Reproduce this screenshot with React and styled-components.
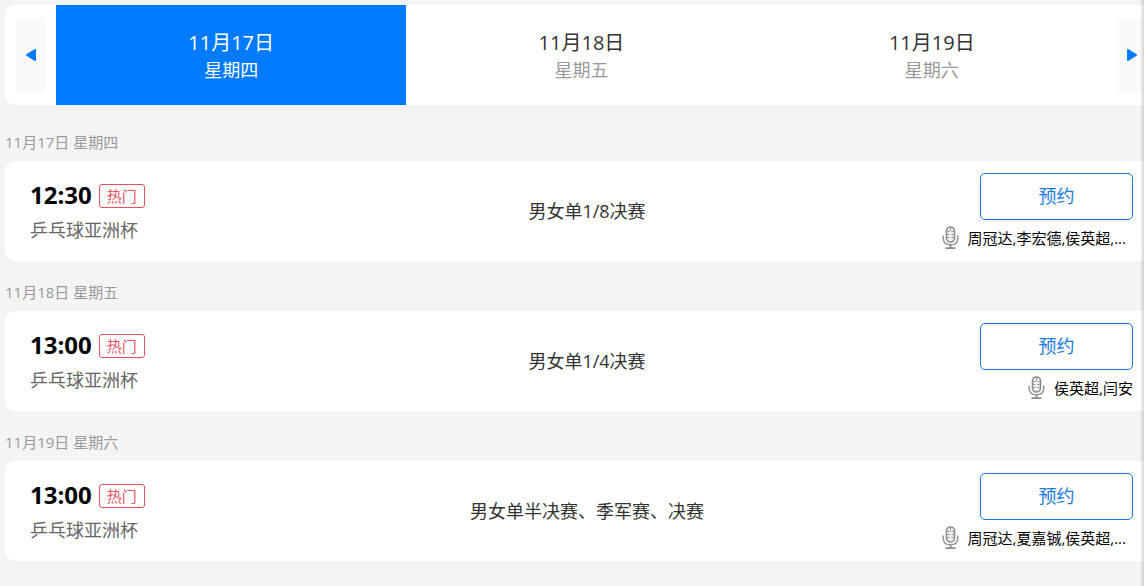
import { useState } from "react";
import styled, { createGlobalStyle } from "styled-components";

const days = [
  { date: "11月17日", week: "星期四" },
  { date: "11月18日", week: "星期五" },
  { date: "11月19日", week: "星期六" },
];

const matches = [
  {
    day: "11月17日 星期四",
    time: "12:30",
    league: "乒乓球亚洲杯",
    title: "男女单1/8决赛",
    hosts: "周冠达,李宏德,侯英超,...",
    long: true,
  },
  {
    day: "11月18日 星期五",
    time: "13:00",
    league: "乒乓球亚洲杯",
    title: "男女单1/4决赛",
    hosts: "侯英超,闫安",
  },
  {
    day: "11月19日 星期六",
    time: "13:00",
    league: "乒乓球亚洲杯",
    title: "男女单半决赛、季军赛、决赛",
    hosts: "周冠达,夏嘉铖,侯英超,...",
    long: true,
  },
];

const MicIcon = () => (
  <svg width="18" height="24" viewBox="0 0 18 24" fill="none" aria-hidden="true">
    <rect x="4.5" y="1" width="8" height="15" rx="4" fill="#f2f2f2" stroke="#8c8c8c" strokeWidth="1.6" />
    <path d="M8.500 2v3M5.500 5.500h2M9.500 5.500h2M5.500 8.500h2M9.500 8.500h2M5.500 11.500h2M9.500 11.500h2" stroke="#8c8c8c" />
    <path d="M1.200 9.500V12c0 4.500 3 6.800 7.300 6.800s7.300-2.300 7.300-6.800V9.500" stroke="#999" strokeWidth="1.600" />
    <path d="M8.500 19v3M3.500 22.200h10" stroke="#8c8c8c" strokeWidth="1.800" />
  </svg>
);

const App = () => {
  const [active, setActive] = useState(0);

  const move = (step) => {
    setActive((prev) => Math.min(days.length - 1, Math.max(0, prev + step)));
  };

  return (
    <>
      <GlobalStyle />
      <Page>
        <DateBar>
          <Arrow type="button" aria-label="前一天" $width={30} onClick={() => move(-1)}>
            <svg width="12" height="14" viewBox="0 0 12 14" aria-hidden="true">
              <path d="M10 2v10L2 7z" fill="#007aff" stroke="#007aff" strokeWidth="2" strokeLinejoin="round" />
            </svg>
          </Arrow>
          <Days>
            {days.map((day, index) => (
              <Day
                key={day.date}
                type="button"
                $active={index === active}
                onClick={() => setActive(index)}
              >
                <DayDate>{day.date}</DayDate>
                <DayWeek $active={index === active}>{day.week}</DayWeek>
              </Day>
            ))}
          </Days>
          <Arrow type="button" aria-label="后一天" $width={27} onClick={() => move(1)}>
            <svg width="14" height="14" viewBox="0 0 14 14" aria-hidden="true">
              <path d="M4 2v10l8-5z" fill="#007aff" stroke="#007aff" strokeWidth="2" strokeLinejoin="round" />
            </svg>
          </Arrow>
        </DateBar>

        {matches.map((match) => (
          <section key={match.day}>
            <SectionTitle>{match.day}</SectionTitle>
            <Card>
              <Info>
                <TimeRow>
                  <Time>{match.time}</Time>
                  <Tag>热门</Tag>
                </TimeRow>
                <League>{match.league}</League>
              </Info>
              <Title>{match.title}</Title>
              <Side>
                <BookButton type="button">预约</BookButton>
                <Hosts>
                  <MicIcon />
                  <HostNames $long={match.long}>{match.hosts}</HostNames>
                </Hosts>
              </Side>
            </Card>
          </section>
        ))}
        <EdgeShadow />
      </Page>
    </>
  );
};

export default App;

const GlobalStyle = createGlobalStyle`
  * {
    box-sizing: border-box;
  }

  body {
    margin: 0;
    background: #f4f4f4;
    font-family: "Open Sans", "Noto Sans CJK SC", sans-serif;
  }

  button {
    font-family: inherit;
    cursor: pointer;
  }
`;

const Page = styled.main`
  position: relative;
  min-height: 100vh;
  padding: 5px 0 0 5px;
`;

const DateBar = styled.nav`
  display: flex;
  align-items: center;
  gap: 10px;
  height: 100px;
  padding-left: 11px;
  background: #fff;
  border-radius: 10px 0 0 10px;
`;

const Arrow = styled.button`
  display: flex;
  align-items: center;
  justify-content: center;
  flex: none;
  width: ${({ $width }) => $width}px;
  height: 75px;
  padding: 0;
  border: none;
  background: #fafafa;
`;

const Days = styled.div`
  display: flex;
  flex: 1;
  height: 100%;
`;

const Day = styled.button`
  display: flex;
  flex: 1;
  flex-direction: column;
  align-items: center;
  justify-content: center;
  padding: 2px 0 0;
  border: none;
  background: ${({ $active }) => ($active ? "#007aff" : "#fff")};
  color: ${({ $active }) => ($active ? "#fff" : "#333")};
`;

const DayDate = styled.span`
  font-size: 20px;
  line-height: 28px;
`;

const DayWeek = styled.span`
  color: ${({ $active }) => ($active ? "#fff" : "#999")};
  font-size: 18px;
  line-height: 26px;
`;

const SectionTitle = styled.h2`
  margin: 0;
  padding: 20px 0 2px;
  color: #999;
  font-size: 15px;
  font-weight: 400;
  line-height: 34px;
`;

const Card = styled.div`
  display: grid;
  grid-template-columns: 35% 31% 34%;
  align-items: center;
  height: 100px;
  padding: 0 11px 0 25px;
  margin-bottom: -6px;
  background: #fff;
  border-radius: 10px 0 0 10px;
`;

const Info = styled.div`
  display: flex;
  flex-direction: column;
  padding-top: 2px;
`;

const TimeRow = styled.div`
  display: flex;
  align-items: center;
  gap: 7px;
`;

const Time = styled.span`
  color: #000;
  font-size: 24px;
  font-weight: 700;
  line-height: 36px;
`;

const Tag = styled.span`
  height: 24px;
  margin-top: 2px;
  padding: 0 7px;
  border: 1px solid #e8525f;
  border-radius: 3px;
  color: #e8525f;
  font-size: 15px;
  line-height: 22px;
`;

const League = styled.span`
  color: #666;
  font-size: 18px;
  line-height: 34px;
`;

const Title = styled.h3`
  margin: 0;
  padding-bottom: 2px;
  color: #333;
  font-size: 18px;
  font-weight: 400;
  text-align: center;
`;

const Side = styled.div`
  display: flex;
  flex-direction: column;
  align-items: flex-end;
  gap: 6px;
`;

const BookButton = styled.button`
  width: 153px;
  height: 47px;
  padding: 0 0 2px;
  border: 1px solid #1a7bdc;
  border-radius: 5px;
  background: #fff;
  color: #1a7bdc;
  font-size: 18px;
`;

const Hosts = styled.div`
  display: flex;
  align-items: center;
  gap: 8px;
`;

const HostNames = styled.span`
  padding-right: ${({ $long }) => ($long ? 7 : 0)}px;
  color: #000;
  font-size: 15px;
  line-height: 24px;
`;

const EdgeShadow = styled.div`
  position: absolute;
  top: 0;
  right: 0;
  bottom: 0;
  width: 4px;
  background: linear-gradient(to right, transparent, rgba(0, 0, 0, 0.16));
  pointer-events: none;
`;
